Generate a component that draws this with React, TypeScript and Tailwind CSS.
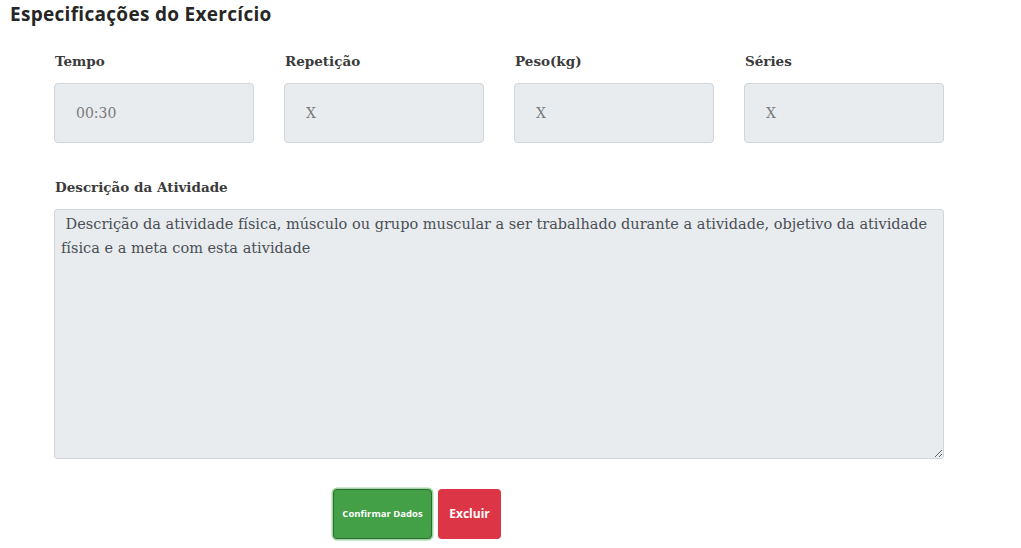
import React from "react";

const serif = { fontFamily: '"DejaVu Serif", "Liberation Serif", serif' };

export default function App() {
  const fields = [
    { label: "Tempo", value: "00:30" },
    { label: "Repetição", value: "X" },
    { label: "Peso(kg)", value: "X" },
    { label: "Séries", value: "X" },
  ];
  return (
    <div className="w-[1021px] h-[548px] bg-white overflow-hidden">
      <h2 className="pl-[10px] pt-[1px] text-[19px] font-bold text-[#262626] font-['Open_Sans',sans-serif] leading-[26px] tracking-[0.3px]">
        Especificações do Exercício
      </h2>
      <div className="pl-[54px] pt-[24px]">
        <div className="grid grid-cols-[200px_200px_200px_200px] gap-x-[30px]">
          {fields.map((f) => (
            <div key={f.label} className="flex flex-col">
              <label className="pl-[1px] text-[13.5px] font-bold text-[#3b3b3b] leading-[20px]" style={serif}>
                {f.label}
              </label>
              <input
                readOnly
                value={f.value}
                className="mt-[12px] h-[60px] w-[200px] rounded-[4px] border border-[#d2d5d8] bg-[#e9ecef] px-[21px] text-[14px] text-[#7a7a7a] outline-none"
                style={serif}
              />
            </div>
          ))}
        </div>
        <label className="mt-[34px] block pl-[1px] text-[13.5px] font-bold text-[#3b3b3b] leading-[20px]" style={serif}>
          Descrição da Atividade
        </label>
        <textarea
          readOnly
          defaultValue=" Descrição da atividade física, músculo ou grupo muscular a ser trabalhado durante a atividade, objetivo da atividade física e a meta com esta atividade"
          className="mt-[12px] block h-[250px] w-[890px] rounded-[3px] border border-[#d2d5d8] bg-[#e9ecef] px-[6px] py-[2px] text-[14.5px] leading-[24px] text-[#4a4f55] outline-none"
          style={serif}
        />
        <div className="mt-[30px] flex gap-[6px] pl-[279px]">
          <button className="h-[50px] w-[99px] rounded-[4px] border border-[#2f6b32] bg-[#43a047] text-[9.5px] font-bold text-white shadow-[0_0_0_1.5px_#9fd6a1] font-['Open_Sans',sans-serif]">
            Confirmar Dados
          </button>
          <button className="h-[50px] w-[63px] rounded-[4px] bg-[#dc3545] text-[12px] font-bold text-white font-['Open_Sans',sans-serif]">
            Excluir
          </button>
        </div>
      </div>
    </div>
  );
}
